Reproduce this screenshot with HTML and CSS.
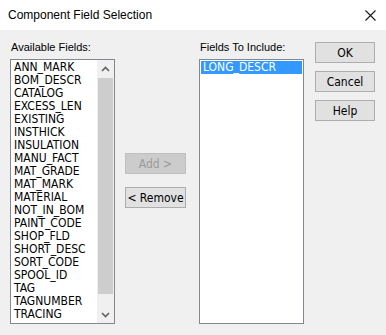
FILE: index.html
```html
<!DOCTYPE html>
<html>
<head>
<meta charset="utf-8">
<link rel="stylesheet" href="styles.css">
</head>
<body>
<div class="window">
  <div class="titlebar">
    <span class="title">Component Field Selection</span>
    <svg class="close" width="11" height="11" viewBox="0 0 11 11"><path d="M0.5 0.5 L10.5 10.5 M10.5 0.5 L0.5 10.5" stroke="#1a1a1a" stroke-width="1.1" fill="none"/></svg>
  </div>
  <div class="content">
    <div class="col">
      <div class="label">Available Fields:</div>
      <div class="listbox">
        <ul class="items">
          <li>ANN_MARK</li><li>BOM_DESCR</li><li>CATALOG</li><li>EXCESS_LEN</li><li>EXISTING</li>
          <li>INSTHICK</li><li>INSULATION</li><li>MANU_FACT</li><li>MAT_GRADE</li><li>MAT_MARK</li>
          <li>MATERIAL</li><li>NOT_IN_BOM</li><li>PAINT_CODE</li><li>SHOP_FLD</li><li>SHORT_DESC</li>
          <li>SORT_CODE</li><li>SPOOL_ID</li><li>TAG</li><li>TAGNUMBER</li><li>TRACING</li>
        </ul>
        <div class="scrollbar">
          <div class="arrow"><svg width="9" height="6" viewBox="0 0 9 6"><path d="M1 5 L4.5 1.5 L8 5" stroke="#606060" stroke-width="1.6" fill="none"/></svg></div>
          <div class="track"><div class="thumb"></div></div>
          <div class="arrow"><svg width="9" height="6" viewBox="0 0 9 6"><path d="M1 1 L4.5 4.5 L8 1" stroke="#606060" stroke-width="1.6" fill="none"/></svg></div>
        </div>
      </div>
    </div>
    <div class="midcol">
      <button class="btn disabled">Add &gt;</button>
      <button class="btn">&lt; Remove</button>
    </div>
    <div class="col">
      <div class="label">Fields To Include:</div>
      <div class="listbox">
        <ul class="items">
          <li class="selected">LONG_DESCR</li>
        </ul>
      </div>
    </div>
    <div class="btncol">
      <button class="btn">OK</button>
      <button class="btn">Cancel</button>
      <button class="btn">Help</button>
    </div>
  </div>
</div>
</body>
</html>
```

FILE: styles.css
```css
html, body {
  margin: 0;
  padding: 0;
  background: #f0f0f0;
}
.window {
  width: 386px;
  height: 335px;
  display: flex;
  flex-direction: column;
  font-family: "Liberation Sans", Arial, sans-serif;
  color: #000;
}
.titlebar {
  height: 30px;
  background: #ffffff;
  display: flex;
  align-items: center;
  justify-content: space-between;
  padding: 0 10px 0 8px;
  box-sizing: border-box;
}
.title {
  font-size: 12px;
  color: #000;
}
.close {
  display: block;
}
.content {
  flex: 1;
  display: flex;
  padding: 11px 0 0 10px;
}
.col {
  display: flex;
  flex-direction: column;
  width: 105px;
}
.label {
  font-size: 11px;
  line-height: 13px;
  height: 13px;
  padding-left: 1px;
  margin-bottom: 5px;
}
.listbox {
  width: 105px;
  height: 265px;
  box-sizing: border-box;
  border: 1px solid #828790;
  background: #fff;
  display: flex;
  padding: 1px 0 1px 1px;
}
.items {
  list-style: none;
  margin: 0;
  padding: 0;
  flex: 1;
  font-family: "DejaVu Sans Condensed", "Liberation Sans", sans-serif;
  font-size: 12px;
  line-height: 13px;
}
.items li {
  height: 13px;
  padding-left: 2px;
  white-space: nowrap;
}
.items li.selected {
  background: #3399ff;
  color: #fff;
  margin-right: 1px;
}
.scrollbar {
  width: 17px;
  margin: -1px 0 -1px 0;
  background: #f0f0f0;
  display: flex;
  flex-direction: column;
}
.arrow {
  height: 17px;
  display: flex;
  align-items: center;
  justify-content: center;
}
.track {
  flex: 1;
  padding: 0 1px;
  display: flex;
  flex-direction: column;
}
.thumb {
  height: 216px;
  background: #cdcdcd;
  margin-top: 1px;
}
.midcol {
  display: flex;
  flex-direction: column;
  gap: 13px;
  margin: 112px 13px 0 10px;
}
.btncol {
  display: flex;
  flex-direction: column;
  gap: 8px;
  margin: 1px 0 0 11px;
}
.btn {
  font-family: "DejaVu Sans Condensed", "Liberation Sans", sans-serif;
  font-size: 12px;
  color: #000;
  background: #e1e1e1;
  border: 1px solid #adadad;
  width: 61px;
  height: 21px;
  padding: 0;
  margin: 0;
  box-sizing: border-box;
}
.btncol .btn {
  width: 60px;
}
.btn.disabled {
  background: #cccccc;
  border-color: #bfbfbf;
  color: #9a9a9a;
}
```
